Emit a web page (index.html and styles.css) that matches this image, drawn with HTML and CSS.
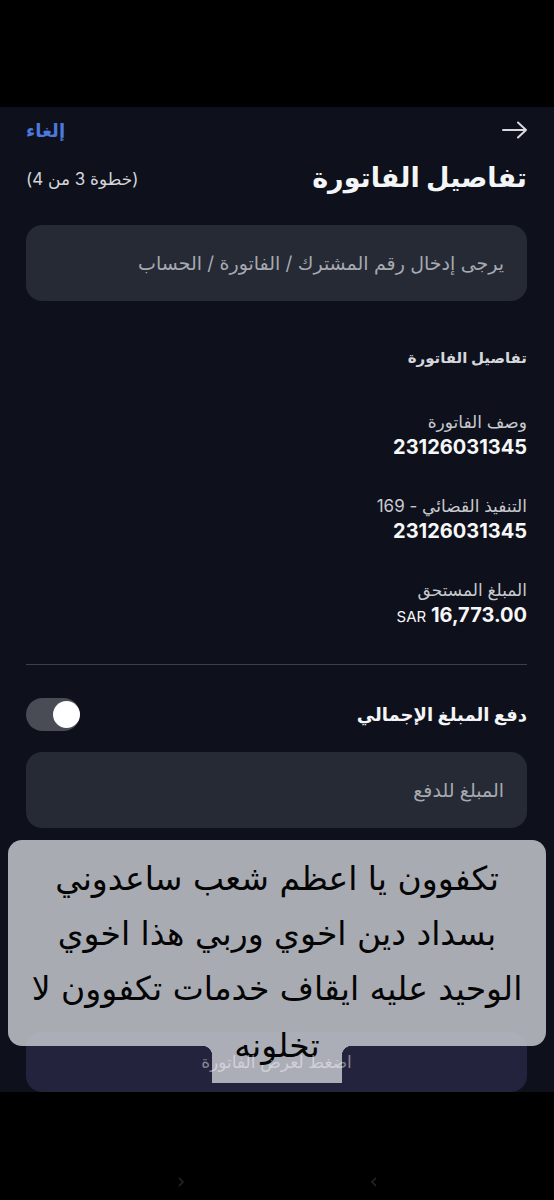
FILE: index.html
```html
<!DOCTYPE html>
<html lang="ar" dir="rtl">
<head>
    <meta charset="UTF-8">
    <meta name="viewport" content="width=device-width, initial-scale=1.0">
    <title>تفاصيل الفاتورة</title>
    <link rel="stylesheet" href="styles.css">
</head>
<body>
    <div class="screen">
        <div class="status-bar"></div>

        <main class="app">
            <header class="nav">
                <svg class="back" width="28" height="20" viewBox="0 0 28 20">
                    <path d="M2 10 H25 M17 2.5 L25 10 L17 17.5" fill="none" stroke="#d8d9de" stroke-width="2" stroke-linecap="round" stroke-linejoin="round"/>
                </svg>
                <a class="cancel">إلغاء</a>
            </header>

            <div class="title-row">
                <h1>تفاصيل الفاتورة</h1>
                <span class="step">(خطوة 3 من 4)</span>
            </div>

            <div class="field">يرجى إدخال رقم المشترك / الفاتورة / الحساب</div>

            <h2 class="section">تفاصيل الفاتورة</h2>

            <div class="detail first">
                <div class="label">وصف الفاتورة</div>
                <div class="value">23126031345</div>
            </div>
            <div class="detail">
                <div class="label">التنفيذ القضائي - 169</div>
                <div class="value">23126031345</div>
            </div>
            <div class="detail">
                <div class="label">المبلغ المستحق</div>
                <div class="value"><span class="amount">16,773.00</span> <span class="currency">SAR</span></div>
            </div>

            <hr class="divider">

            <div class="toggle-row">
                <span class="toggle-label">دفع المبلغ الإجمالي</span>
                <span class="switch"><span class="knob"></span></span>
            </div>

            <div class="field second">المبلغ للدفع</div>

            <button class="show-btn"><span class="btn-text">اضغط لعرض الفاتورة</span></button>
        </main>

        <div class="home-bar">
            <svg width="10" height="12" viewBox="0 0 10 12"><path d="M7 2 L3 6 L7 10" fill="none" stroke="#262626" stroke-width="1.5"/></svg>
            <svg width="10" height="12" viewBox="0 0 10 12"><path d="M3 2 L7 6 L3 10" fill="none" stroke="#262626" stroke-width="1.5"/></svg>
        </div>

        <div class="caption">
            <div class="caption-main">
                <div>تكفوون يا اعظم شعب ساعدوني</div>
                <div>بسداد دين اخوي وربي هذا اخوي</div>
                <div>الوحيد عليه ايقاف خدمات تكفوون لا</div>
            </div>
            <div class="caption-tail"><span>تخلونه</span></div>
        </div>
    </div>
</body>
</html>
```

FILE: styles.css
```css
body {
    margin: 0;
    background: #000;
    font-family: "Inter", "DejaVu Sans", sans-serif;
    direction: rtl;
}
.screen {
    position: relative;
    width: 554px;
    height: 1200px;
    overflow: hidden;
}
.status-bar {
    height: 107px;
    background: #000;
}
.app {
    height: 985px;
    box-sizing: border-box;
    padding: 0 27px 0 26px;
    background: #0e111b;
    display: flex;
    flex-direction: column;
}
.nav {
    height: 46px;
    display: flex;
    align-items: center;
    justify-content: space-between;
}
.back {
    display: block;
    margin-right: -2px;
}
.cancel {
    color: #4d78dc;
    font-size: 18px;
    font-weight: bold;
}
.title-row {
    height: 48px;
    display: flex;
    align-items: center;
    justify-content: space-between;
}
h1 {
    margin: 0;
    color: #f4f5f7;
    font-size: 27px;
    font-weight: bold;
}
.step {
    color: #d4d5da;
    font-size: 17px;
    margin-top: 4px;
}
.field {
    margin-top: 24px;
    height: 76px;
    box-sizing: border-box;
    padding: 0 23px;
    display: flex;
    align-items: center;
    background: #252a35;
    border-radius: 16px;
    color: #a6a9b0;
    font-size: 19px;
}
.field.second {
    margin-top: 21px;
}
.section {
    margin: 45px 0 0;
    line-height: 24px;
    color: #d6d7dc;
    font-size: 15px;
    font-weight: bold;
}
.detail {
    margin-top: 34px;
}
.detail.first {
    margin-top: 40px;
}
.label {
    line-height: 24px;
    color: #c8cad0;
    font-size: 17px;
}
.value {
    line-height: 26px;
    color: #f6f7f9;
    font-size: 20px;
    font-weight: bold;
}
.currency {
    font-size: 15px;
    font-weight: normal;
}
.divider {
    margin: 34px 0 0;
    border: none;
    border-top: 1px solid #3c3f49;
}
.toggle-row {
    margin-top: 32px;
    height: 34px;
    display: flex;
    align-items: center;
    justify-content: space-between;
}
.toggle-label {
    color: #f4f5f7;
    font-size: 18px;
    font-weight: bold;
}
.switch {
    width: 54px;
    height: 33px;
    border-radius: 17px;
    background: #4a4c55;
    display: flex;
    align-items: center;
    padding-left: 3px;
    box-sizing: border-box;
}
.knob {
    width: 27px;
    height: 27px;
    border-radius: 50%;
    background: #fff;
}
.show-btn {
    margin-top: auto;
    height: 60px;
    border: none;
    border-radius: 16px;
    background: #23233d;
    font-family: inherit;
    font-size: 17px;
}
.btn-text {
    position: relative;
    z-index: 3;
    color: rgba(255, 255, 255, 0.45);
}
.home-bar {
    height: 108px;
    display: flex;
    justify-content: center;
    gap: 183px;
    align-items: flex-end;
    padding-bottom: 12px;
    box-sizing: border-box;
}
/* text sticker laid over the screenshot */
.caption {
    position: absolute;
    left: 8px;
    top: 840px;
    width: 538px;
    z-index: 2;
    text-align: center;
    color: #050505;
    font-family: "DejaVu Sans", sans-serif;
    font-size: 33px;
}
.caption-main {
    height: 206px;
    box-sizing: border-box;
    padding-top: 11px;
    line-height: 55px;
    background: rgba(186, 188, 196, 0.9);
    border-radius: 14px;
}
.caption-tail {
    position: relative;
    width: 130px;
    height: 37px;
    margin: 0 auto;
    background: rgba(186, 188, 196, 0.9);
}
.caption-tail::before,
.caption-tail::after {
    content: "";
    position: absolute;
    top: 0;
    width: 10px;
    height: 10px;
}
.caption-tail::before {
    left: -10px;
    background: radial-gradient(circle at 0 100%, transparent 10px, rgba(186, 188, 196, 0.9) 10.5px);
}
.caption-tail::after {
    right: -10px;
    background: radial-gradient(circle at 100% 100%, transparent 10px, rgba(186, 188, 196, 0.9) 10.5px);
}
.caption-tail span {
    position: relative;
    top: -28px;
    display: block;
    line-height: 55px;
}
```
